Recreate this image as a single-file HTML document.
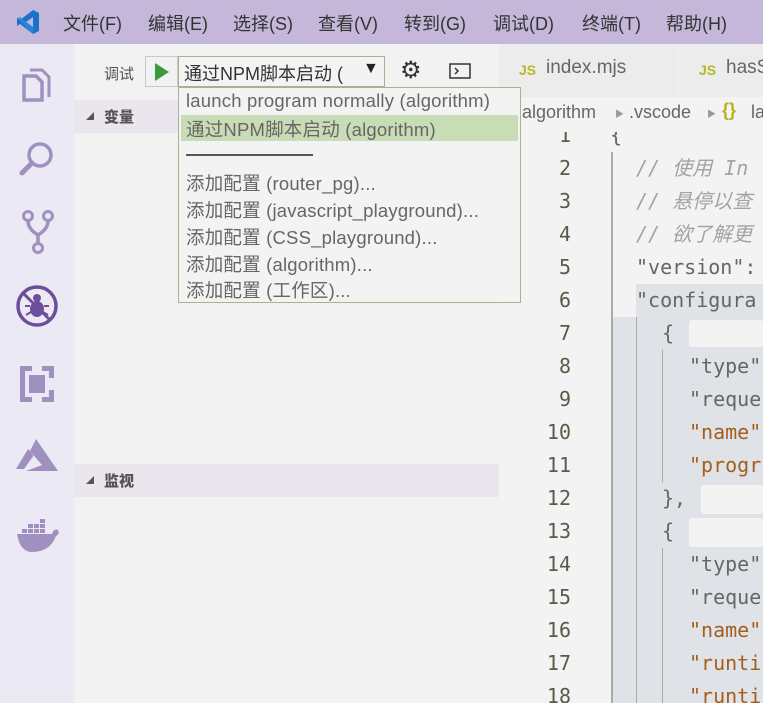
<!DOCTYPE html>
<html><head><meta charset="utf-8"><style>
*{margin:0;padding:0;box-sizing:border-box}
html{width:763px;height:703px;overflow:hidden;background:#f3f3f3}
body{width:763px;height:703px;overflow:hidden;background:#f3f3f3;font-family:"Liberation Sans","Noto Sans CJK SC",sans-serif;position:relative}
.abs{position:absolute}
#title{left:0;top:0;width:763px;height:44px;background:#c4b7d9}
#title span{position:absolute;top:10px;font-size:18px;color:#333}
#act{left:0;top:44px;width:74px;height:659px;background:#ebeaf4}
#side{left:74px;top:44px;width:425px;height:659px;background:#f2f2f2}
.hdr{position:absolute;left:0;width:425px;height:33px;background:#ebe6ee;font-size:15px;font-weight:bold;color:#555}
.hdr i{position:absolute;left:12px;top:12px;width:0;height:0;border-left:8px solid transparent;border-bottom:8px solid #555}
.hdr b{position:absolute;left:30px;top:6px}
#tabs{left:499px;top:44px;width:264px;height:53px;background:#ececec}
#bc{left:499px;top:97px;width:264px;height:35px;background:#f3f3f3;font-size:18px;color:#666;z-index:2}
.ln{position:absolute;width:72px;left:499px;text-align:right;font-family:"DejaVu Sans Mono",monospace;font-size:20px;color:#5a5a48;height:33px;line-height:33px}
.cd{position:absolute;white-space:pre;font-family:"DejaVu Sans Mono","Noto Sans CJK SC",monospace;font-size:20px;height:33px;line-height:33px;color:#666}
.cm{color:#a3a3a3;font-style:italic}
.or{color:#a45f1d}
#dd{left:178px;top:87px;width:343px;height:216px;border:1px solid #a3b58f;background:#f3f3f3;z-index:5}
#dd div{position:absolute;left:7px;font-size:18.5px;color:#666;white-space:nowrap;letter-spacing:0.2px}
</style></head><body>
<div id="title" class="abs">
<svg class="abs" style="left:16px;top:9px" width="24" height="26" viewBox="0 0 24 26"><path d="M17 1 L23 4 V22 L17 25 L4 15 L1 17 V9 L4 11 Z M17 8 L10 13 L17 18 Z" fill="#1a73c8"/><path d="M1 9 L4 8 L17 18 V25 Z" fill="#2a8ae0" opacity=".8"/></svg>
<span style="left:63px">文件(F)</span><span style="left:148px">编辑(E)</span><span style="left:233px">选择(S)</span><span style="left:318px">查看(V)</span><span style="left:404px">转到(G)</span><span style="left:493px">调试(D)</span><span style="left:582px">终端(T)</span><span style="left:666px">帮助(H)</span>
</div>
<div id="act" class="abs">
<svg class="abs" style="left:20px;top:20px" width="34" height="40" viewBox="0 0 34 40"><path d="M10 6 h12 l7 7 v20" fill="none" stroke="#a090c0" stroke-width="3"/><path d="M4 12 h12 l6 6 v18 h-18 z" fill="none" stroke="#a090c0" stroke-width="3.5"/></svg>
<svg class="abs" style="left:18px;top:94px" width="40" height="40" viewBox="0 0 40 40"><circle cx="22" cy="17" r="11" fill="none" stroke="#a090c0" stroke-width="3.5"/><path d="M14 25 L4 35" stroke="#a090c0" stroke-width="5" stroke-linecap="round"/></svg>
<svg class="abs" style="left:20px;top:165px" width="36" height="46" viewBox="0 0 36 46"><circle cx="8" cy="7" r="4.5" fill="none" stroke="#a090c0" stroke-width="3"/><circle cx="28" cy="7" r="4.5" fill="none" stroke="#a090c0" stroke-width="3"/><circle cx="18" cy="39" r="4.5" fill="none" stroke="#a090c0" stroke-width="3"/><path d="M8 12 Q8 20 18 26 Q28 20 28 12 M18 26 V34" fill="none" stroke="#a090c0" stroke-width="3.5"/></svg>
<svg class="abs" style="left:15px;top:240px" width="44" height="44" viewBox="0 0 44 44"><circle cx="22" cy="22" r="19" fill="none" stroke="#6c4f9a" stroke-width="3.5"/><ellipse cx="22" cy="25" rx="7" ry="8" fill="#6c4f9a"/><circle cx="22" cy="14" r="4" fill="#6c4f9a"/><path d="M9 10 L35 36" stroke="#6c4f9a" stroke-width="3"/><path d="M10 22h5M29 22h5M11 31l5-3M33 31l-5-3" stroke="#6c4f9a" stroke-width="2"/></svg>
<svg class="abs" style="left:20px;top:322px" width="34" height="36" viewBox="0 0 34 36"><path d="M0 0h12v5h-7v26h7v5H0z M22 0h12v12h-5v-7h-7z M29 24h5v12H22v-5h7z" fill="#a090c0"/><rect x="9" y="9" width="16" height="18" fill="#a090c0"/></svg>
<svg class="abs" style="left:16px;top:395px" width="42" height="32" viewBox="0 0 42 32"><path d="M20 0 L42 32 H10 L26 26 L14 12 Z M12 10 L0 30 H8 L18 16 Z" fill="#a090c0"/></svg>
<svg class="abs" style="left:16px;top:474px" width="44" height="34" viewBox="0 0 44 34"><path d="M1 16 H36 Q38 10 42 12 Q44 16 40 18 Q34 34 16 34 Q4 34 1 16 Z" fill="#a090c0"/><path d="M6 11h5v4H6zM12 11h5v4h-5zM18 11h5v4h-5zM24 11h5v4h-5zM12 6h5v4h-5zM18 6h5v4h-5zM24 6h5v4h-5zM24 1h5v4h-5z" fill="#a090c0"/></svg>
</div>
<div id="side" class="abs">
<span class="abs" style="left:30px;top:19px;font-size:15px;color:#555">调试</span>
<div class="abs" style="left:71px;top:12px;width:33px;height:31px;border:1px solid #c8c8c8;background:#f2f2f2"></div>
<svg class="abs" style="left:80px;top:18px" width="16" height="20"><path d="M1 1 L15 10 L1 19Z" fill="#3b9a3b"/></svg>
<div class="abs" style="left:104px;top:12px;width:207px;height:31px;border:1px solid #a3b58f;background:#f3f3f3;font-size:18px;color:#333;padding:3px 5px;white-space:nowrap;overflow:hidden">通过NPM脚本启动 (</div>
<span class="abs" style="left:289px;top:16px;font-size:16px;color:#222">▼</span>
<span class="abs" style="left:326px;top:12px;font-size:24px;color:#333">⚙</span>
<svg class="abs" style="left:375px;top:19px" width="22" height="16"><rect x="1" y="1" width="20" height="14" fill="none" stroke="#333" stroke-width="1.5"/><path d="M6 5 L9 8 L6 11" fill="none" stroke="#333" stroke-width="1.5"/></svg>
<div class="hdr" style="top:56px"><i></i><b>变量</b></div>
<div class="hdr" style="top:420px"><i></i><b>监视</b></div>
</div>
<div id="tabs" class="abs">
<span class="abs" style="left:20px;top:18px;font-size:14px;font-weight:bold;color:#b7b72a">JS</span>
<span class="abs" style="left:47px;top:13px;font-size:19px;color:#666">index.mjs</span>
<div class="abs" style="left:179px;top:0;width:1px;height:53px;background:#f3f3f3"></div>
<span class="abs" style="left:200px;top:18px;font-size:14px;font-weight:bold;color:#b7b72a">JS</span>
<span class="abs" style="left:227px;top:13px;font-size:19px;color:#666">hasS</span>
</div>
<div id="bc" class="abs"><span class="abs" style="left:23px;top:5px">algorithm</span><span class="abs" style="left:116px;top:10px;font-size:9px;color:#999">▶</span><span class="abs" style="left:130px;top:5px">.vscode</span><span class="abs" style="left:208px;top:10px;font-size:9px;color:#999">▶</span><span class="abs" style="left:223px;top:3px;color:#b8b020;font-weight:bold">{}</span><span class="abs" style="left:252px;top:5px">la</span></div>
<div class="abs" style="left:636px;top:284px;width:127px;height:33px;background:#dfe2e7"></div>
<div class="abs" style="left:611px;top:317px;width:152px;height:386px;background:#dfe2e7"></div>
<div class="abs" style="left:689px;top:320px;width:74px;height:27px;background:#f3f3f3;border-radius:3px"></div>
<div class="abs" style="left:701px;top:485px;width:62px;height:29px;background:#f3f3f3;border-radius:3px"></div>
<div class="abs" style="left:689px;top:518px;width:74px;height:29px;background:#f3f3f3;border-radius:3px"></div>
<div class="abs" style="left:611px;top:152px;width:1.5px;height:551px;background:#aaa"></div>
<div class="abs" style="left:636px;top:317px;width:1px;height:386px;background:#aaa"></div>
<div class="abs" style="left:662px;top:350px;width:1px;height:132px;background:#aaa"></div>
<div class="abs" style="left:662px;top:548px;width:1px;height:155px;background:#aaa"></div>
<div class="ln" style="top:119px">1</div><div class="ln" style="top:152px">2</div><div class="ln" style="top:185px">3</div><div class="ln" style="top:218px">4</div><div class="ln" style="top:251px">5</div><div class="ln" style="top:284px">6</div><div class="ln" style="top:317px">7</div><div class="ln" style="top:350px">8</div><div class="ln" style="top:383px">9</div><div class="ln" style="top:416px">10</div><div class="ln" style="top:449px">11</div><div class="ln" style="top:482px">12</div><div class="ln" style="top:515px">13</div><div class="ln" style="top:548px">14</div><div class="ln" style="top:581px">15</div><div class="ln" style="top:614px">16</div><div class="ln" style="top:647px">17</div><div class="ln" style="top:680px">18</div>
<div class="cd" style="left:610px;top:119px">{</div>
<div class="cd cm" style="left:636px;top:152px">// 使用 In</div>
<div class="cd cm" style="left:636px;top:185px">// 悬停以查</div>
<div class="cd cm" style="left:636px;top:218px">// 欲了解更</div>
<div class="cd" style="left:636px;top:251px">"version":</div>
<div class="cd" style="left:636px;top:284px">"configura</div>
<div class="cd" style="left:662px;top:317px">{</div>
<div class="cd" style="left:689px;top:350px">"type"</div>
<div class="cd" style="left:689px;top:383px">"reque</div>
<div class="cd or" style="left:689px;top:416px">"name"</div>
<div class="cd or" style="left:689px;top:449px">"progr</div>
<div class="cd" style="left:662px;top:482px">},</div>
<div class="cd" style="left:662px;top:515px">{</div>
<div class="cd" style="left:689px;top:548px">"type"</div>
<div class="cd" style="left:689px;top:581px">"reque</div>
<div class="cd or" style="left:689px;top:614px">"name"</div>
<div class="cd or" style="left:689px;top:647px">"runti</div>
<div class="cd or" style="left:689px;top:680px">"runti</div>
<div id="dd" class="abs">
<div style="top:2px">launch program normally (algorithm)</div>
<div style="left:2px;top:27px;width:337px;height:26px;background:#c8ddb6"></div>
<div style="top:28px">通过NPM脚本启动 (algorithm)</div>
<div style="top:66px;width:127px;height:1.5px;background:#555"></div>
<div style="top:82px">添加配置 (router_pg)...</div>
<div style="top:109px">添加配置 (javascript_playground)...</div>
<div style="top:136px">添加配置 (CSS_playground)...</div>
<div style="top:163px">添加配置 (algorithm)...</div>
<div style="top:189px">添加配置 (工作区)...</div>
</div>
</body></html>
